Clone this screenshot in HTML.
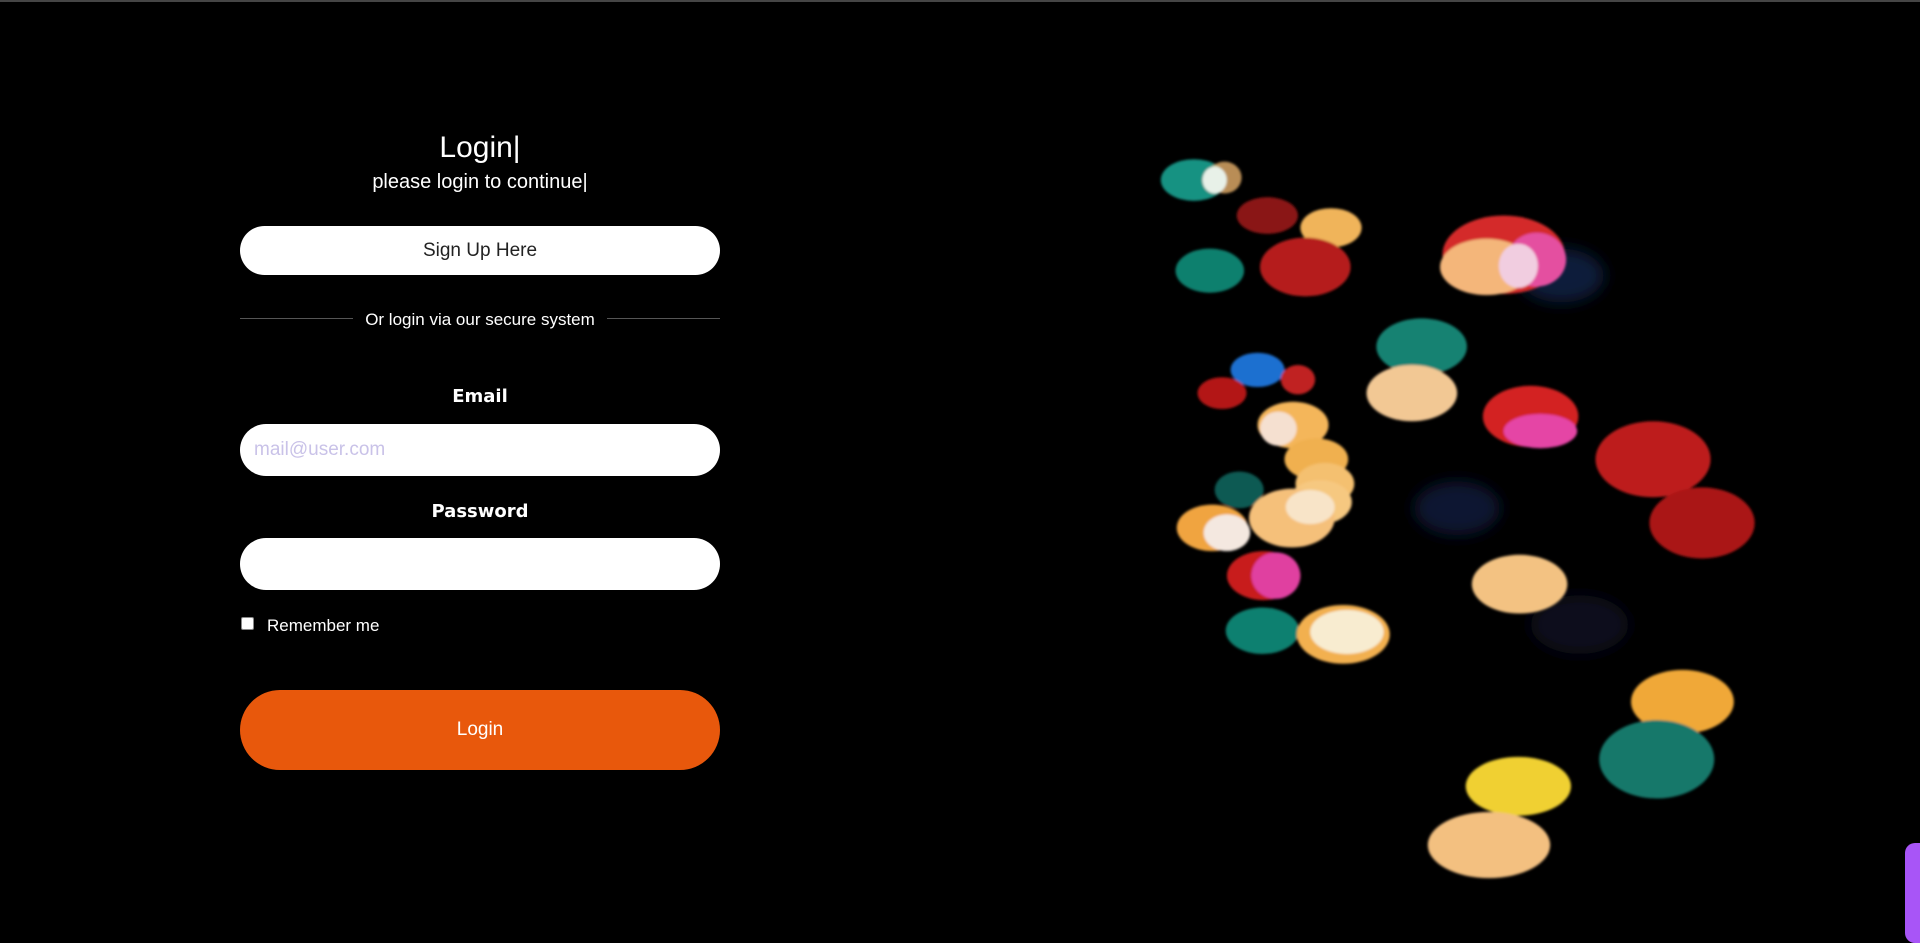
<!DOCTYPE html>
<html><head><meta charset="utf-8"><style>
*{margin:0;padding:0;box-sizing:border-box}
body{width:1920px;height:943px;background:#000;overflow:hidden;position:relative;font-family:"Liberation Sans",sans-serif;color:#fff}
.top{position:absolute;left:0;top:0;width:1920px;height:2px;background:#454545}
.a{position:absolute}
.c{left:240px;width:480px;text-align:center}
.pill{border-radius:30px;background:#fff}
</style></head><body>
<div class="top"></div>
<svg class="a" style="left:0;top:0" width="1920" height="943" viewBox="0 0 1568 770" preserveAspectRatio="none">
<defs><filter id="b" x="-50%" y="-50%" width="200%" height="200%"><feGaussianBlur stdDeviation="1"/></filter>
<filter id="bb" x="-50%" y="-50%" width="200%" height="200%"><feGaussianBlur stdDeviation="6"/></filter></defs>
<g filter="url(#bb)">
<ellipse cx="1275" cy="225" rx="35" ry="22" fill="#0a1a3a"/>
<ellipse cx="1190" cy="415" rx="35" ry="22" fill="#0a1530"/>
<ellipse cx="1290" cy="510" rx="40" ry="24" fill="#070c1e"/>
</g>
<g filter="url(#b)">
<ellipse cx="975" cy="147" rx="27" ry="17" fill="#139282"/>
<ellipse cx="1000" cy="145" rx="14" ry="13" fill="#e7b06a" opacity=".8"/>
<ellipse cx="992" cy="147" rx="10" ry="11" fill="#e8f1e8"/>
<ellipse cx="1035" cy="176" rx="25" ry="15" fill="#8a1313"/>
<ellipse cx="1087" cy="186" rx="25" ry="16" fill="#f0b45a"/>
<ellipse cx="988" cy="221" rx="28" ry="18" fill="#11806e"/>
<ellipse cx="1066" cy="218" rx="37" ry="24" fill="#b51e1e"/>
<ellipse cx="1228" cy="208" rx="50" ry="32" fill="#d42a2a"/>
<ellipse cx="1214" cy="218" rx="38" ry="23" fill="#f4b67a"/>
<ellipse cx="1255" cy="212" rx="24" ry="22" fill="#e44fa0"/>
<ellipse cx="1240" cy="217" rx="16" ry="18" fill="#f1cde0"/>
<ellipse cx="1161" cy="283" rx="37" ry="23" fill="#128272"/>
<ellipse cx="1153" cy="321" rx="37" ry="23" fill="#f2c894"/>
<ellipse cx="1027" cy="302" rx="22" ry="14" fill="#1e70d0"/>
<ellipse cx="1060" cy="310" rx="14" ry="12" fill="#c02020"/>
<ellipse cx="998" cy="321" rx="20" ry="13" fill="#b31818"/>
<ellipse cx="1250" cy="340" rx="39" ry="25" fill="#d32323"/>
<ellipse cx="1258" cy="352" rx="30" ry="14" fill="#e545a5"/>
<ellipse cx="1350" cy="375" rx="47" ry="31" fill="#bd1d1d"/>
<ellipse cx="1390" cy="427" rx="43" ry="29" fill="#aa1717"/>
<ellipse cx="1012" cy="400" rx="20" ry="15" fill="#0e5a52"/>
<ellipse cx="1056" cy="347" rx="29" ry="19" fill="#f4b65a"/>
<ellipse cx="1044" cy="350" rx="15" ry="14" fill="#f5e0d0"/>
<ellipse cx="1075" cy="375" rx="26" ry="17" fill="#f0b050"/>
<ellipse cx="1082" cy="395" rx="24" ry="17" fill="#f4c070"/>
<ellipse cx="1078" cy="410" rx="26" ry="18" fill="#f6c880"/>
<ellipse cx="1055" cy="423" rx="35" ry="24" fill="#f5c07a"/>
<ellipse cx="1070" cy="414" rx="20" ry="14" fill="#f8e4c8"/>
<ellipse cx="990" cy="431" rx="29" ry="19" fill="#f0a440"/>
<ellipse cx="1002" cy="435" rx="19" ry="15" fill="#f4e8e0"/>
<ellipse cx="1032" cy="470" rx="30" ry="20" fill="#c81e1e"/>
<ellipse cx="1042" cy="470" rx="20" ry="19" fill="#e040a0"/>
<ellipse cx="1241" cy="477" rx="39" ry="24" fill="#f3c282"/>
<ellipse cx="1031" cy="515" rx="30" ry="19" fill="#118070"/>
<ellipse cx="1097" cy="518" rx="38" ry="24" fill="#f2b050"/>
<ellipse cx="1100" cy="516" rx="30" ry="18" fill="#f8ecd0"/>
<ellipse cx="1374" cy="573" rx="42" ry="26" fill="#f0a838"/>
<ellipse cx="1353" cy="620" rx="47" ry="32" fill="#12786a"/>
<ellipse cx="1240" cy="642" rx="43" ry="24" fill="#f0d030"/>
<ellipse cx="1216" cy="690" rx="50" ry="27" fill="#f3c080"/>
</g>
</svg>
<div class="a" style="left:1905px;top:843px;width:20px;height:100px;background:#a855f7;border-radius:10px 0 0 10px"></div>

<div class="a c" style="top:130px;font-size:30px;line-height:36px">Login|</div>
<div class="a c" style="top:170px;font-size:20px;line-height:24px">please login to continue|</div>
<div class="a c pill" style="top:226px;height:49px;line-height:49px;color:#222;font-size:19px">Sign Up Here</div>
<div class="a" style="left:240px;top:318px;width:113px;height:1px;background:#555"></div>
<div class="a" style="left:607px;top:318px;width:113px;height:1px;background:#555"></div>
<div class="a c" style="top:309px;font-size:17px;line-height:22px">Or login via our secure system</div>
<div class="a c" style="top:386px;font-size:18px;line-height:22px;font-weight:bold;font-family:'DejaVu Sans',sans-serif">Email</div>
<div class="a pill" style="left:240px;top:424px;width:480px;height:52px;line-height:52px;padding-left:14px;font-size:19px;color:#c9c2e8">mail@user.com</div>
<div class="a c" style="top:501px;font-size:18px;line-height:22px;font-weight:bold;font-family:'DejaVu Sans',sans-serif">Password</div>
<div class="a pill" style="left:240px;top:538px;width:480px;height:52px"></div>
<div class="a" style="left:241px;top:617px;width:13px;height:13px;background:#fff;border-radius:2px;border:1px solid #888"></div>
<div class="a" style="left:267px;top:615px;font-size:17px;line-height:22px">Remember me</div>
<div class="a c" style="top:690px;height:80px;line-height:80px;border-radius:40px;background:#e8580c;font-size:19px">Login</div>
</body></html>
